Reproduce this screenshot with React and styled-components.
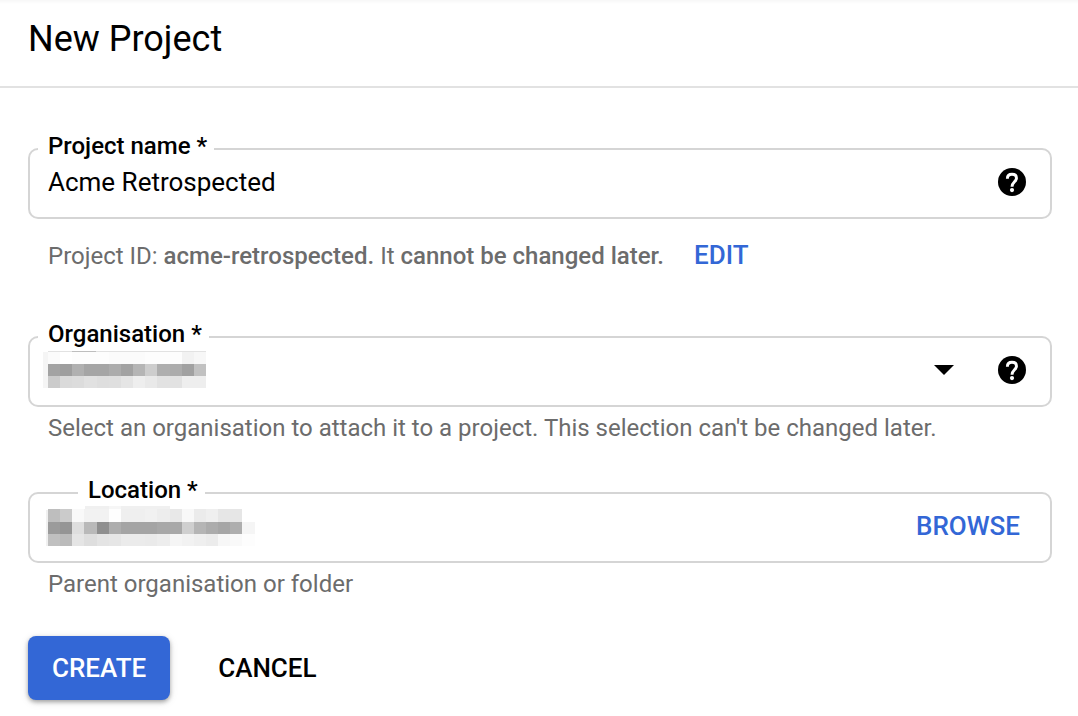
import React, { useState } from "react";
import styled, { createGlobalStyle } from "styled-components";

const GlobalStyle = createGlobalStyle`
  *, *::before, *::after { box-sizing: border-box; }
  body {
    margin: 0;
    background: #fff;
    color: #000;
    font-family: Roboto, "Liberation Sans", sans-serif;
    font-size: 24px;
    line-height: 32px;
  }
`;

const Header = styled.header`
  padding: 19px 28px 27px;
  border-bottom: 2px solid #e2e2e2;
  background: linear-gradient(#f7f7f7, #fff 4px);
`;

const Title = styled.h1`
  margin: 0;
  font-size: 36px;
  line-height: 40px;
  font-weight: 400;
`;

const Form = styled.form`
  padding: 46px 26px 16px 28px;
`;

const Field = styled.div`
  margin-bottom: ${(p) => p.$space}px;
`;

const Outline = styled.fieldset`
  min-width: 0;
  margin: 0;
  padding: 1px 0 18px;
  border: 2px solid #d5d5d5;
  border-radius: 10px;
`;

const Legend = styled.legend`
  margin-left: ${(p) => (p.$inset ? 48 : 8)}px;
  padding: 0 7px 6px 10px;
  line-height: 24px;
  font-weight: 500;
`;

const Row = styled.div`
  position: relative;
  display: flex;
  align-items: center;
  height: 34px;
  padding: 0 ${(p) => p.$end || 24}px 0 18px;
`;

const Input = styled.input`
  flex: 1;
  min-width: 0;
  height: 34px;
  padding: 0;
  border: 0;
  outline: 0;
  background: transparent;
  color: inherit;
  font: inherit;
  font-size: 26px;
`;

const Select = styled(Input).attrs({ as: "select" })`
  appearance: none;
`;

const Censored = styled.svg`
  position: absolute;
  left: 12px;
  top: -3px;
  pointer-events: none;
`;

const Arrow = styled.svg`
  flex: none;
  margin-right: 44px;
  pointer-events: none;
`;

const TextButton = styled.button`
  flex: none;
  padding: 0;
  border: 0;
  background: none;
  color: ${(p) => (p.$plain ? "#000" : "#3367d6")};
  font: inherit;
  font-size: 26px;
  line-height: 30px;
  font-weight: 500;
  cursor: pointer;
`;

const IconButton = styled(TextButton)`
  display: flex;
  color: #000;
`;

const PrimaryButton = styled(TextButton)`
  height: 64px;
  padding: 0 24px;
  border-radius: 8px;
  background: #3367d6;
  color: #fff;
  box-shadow: 0 2px 4px rgba(0, 0, 0, 0.32), 0 2px 10px rgba(0, 0, 0, 0.1);
`;

const Hint = styled.div`
  display: flex;
  align-items: flex-start;
  gap: 30px;
  margin-top: ${(p) => p.$top || 5}px;
  padding-left: 20px;
  color: #6c6c6c;

  p { margin: 0; }
  b { font-weight: 500; }
`;

const Actions = styled.div`
  display: flex;
  align-items: center;
  gap: 48px;
`;

function Help({ topic }) {
  return (
    <IconButton type="button" aria-label={`Help: ${topic}`}>
      <svg width="28" height="28" viewBox="2 2 20 20" aria-hidden="true">
        <circle cx="12" cy="12" r="10" fill="currentColor" />
        <circle cx="12" cy="17.8" r="1.5" fill="#fff" />
        <path
          fill="none"
          stroke="#fff"
          strokeWidth="2.1"
          d="M8.7 9.6C8.7 7.6 10.1 6.5 12 6.5S15.2 7.6 15.2 9.3C15.2 11.8 12 12 12 15.4"
        />
      </svg>
    </IconButton>
  );
}

/* Each block is [x, y, width, height, grey level]; columns are a little over 12 wide. */
const column = (i) => Math.round(i * 12.15);

function strip(x, y, levels, height = 12) {
  return levels.map((level, i) => [x + column(i), y, column(i + 1) - column(i), height, level]);
}

const ORGANISATION_BLOCKS = [
  [1, 2, 5, 36, 245],
  [6, 1, 158, 1, 226],
  [30, 1, 24, 1, 190],
  ...strip(6, 2, [251, 255, 253, 253, 253, 251, 251, 251, 253, 253, 253, 242, 247]),
  ...strip(6, 14, [163, 158, 176, 165, 165, 172, 162, 181, 205, 174, 172, 161, 193]),
  ...strip(6, 26, [203, 218, 220, 225, 222, 223, 229, 238, 233, 226, 226, 238, 238]),
];

const LOCATION_BLOCKS = [
  ...strip(43, 0, [240, 240, 246, 240, 240, 240, 240], 3),
  [4, 4, 2, 36, 240],
  ...strip(6, 3, [190, 203, 249, 242, 242, 254, 239, 239, 241, 237, 232, 248, 235, 239, 230, 230], 13),
  ...strip(6, 16, [155, 149, 222, 185, 143, 173, 164, 164, 164, 168, 168, 207, 181, 172, 166, 174, 245]),
  ...strip(6, 28, [192, 187, 229, 222, 228, 230, 235, 235, 234, 237, 245, 242, 239, 236, 247, 249, 253]),
];

function Mosaic({ blocks }) {
  return (
    <Censored width="216" height="42" shapeRendering="crispEdges" aria-hidden="true">
      {blocks.map(([x, y, w, h, level], i) => (
        <rect key={i} x={x} y={y} width={w} height={h} fill={`rgb(${level},${level},${level})`} />
      ))}
    </Censored>
  );
}

export default function App() {
  const [name, setName] = useState("Acme Retrospected");
  return (
    <>
      <GlobalStyle />
      <Header>
        <Title>New Project</Title>
      </Header>
      <main>
        <Form onSubmit={(e) => e.preventDefault()}>
          <Field $space={50}>
            <Outline>
              <Legend><label htmlFor="name">Project name *</label></Legend>
              <Row>
                <Input id="name" value={name} onChange={(e) => setName(e.target.value)} />
                <Help topic="project name" />
              </Row>
            </Outline>
            <Hint $top={21}>
              <p>Project ID: <b>acme-retrospected.</b> It <b>cannot be changed later.</b></p>
              <TextButton type="button">EDIT</TextButton>
            </Hint>
          </Field>

          <Field $space={34}>
            <Outline>
              <Legend><label htmlFor="organisation">Organisation *</label></Legend>
              <Row>
                <Select id="organisation"><option value="" /></Select>
                <Mosaic blocks={ORGANISATION_BLOCKS} />
                <Arrow width="20" height="10" viewBox="0 0 20 10" aria-hidden="true">
                  <path d="M0 0h20L10 10z" />
                </Arrow>
                <Help topic="organisation" />
              </Row>
            </Outline>
            <Hint><p>Select an organisation to attach it to a project. This selection can't be changed later.</p></Hint>
          </Field>

          <Field $space={36}>
            <Outline>
              <Legend $inset><label htmlFor="location">Location *</label></Legend>
              <Row $end={30}>
                <Input id="location" readOnly />
                <Mosaic blocks={LOCATION_BLOCKS} />
                <TextButton type="button">BROWSE</TextButton>
              </Row>
            </Outline>
            <Hint><p>Parent organisation or folder</p></Hint>
          </Field>

          <Actions>
            <PrimaryButton type="submit">CREATE</PrimaryButton>
            <TextButton type="button" $plain>CANCEL</TextButton>
          </Actions>
        </Form>
      </main>
    </>
  );
}
